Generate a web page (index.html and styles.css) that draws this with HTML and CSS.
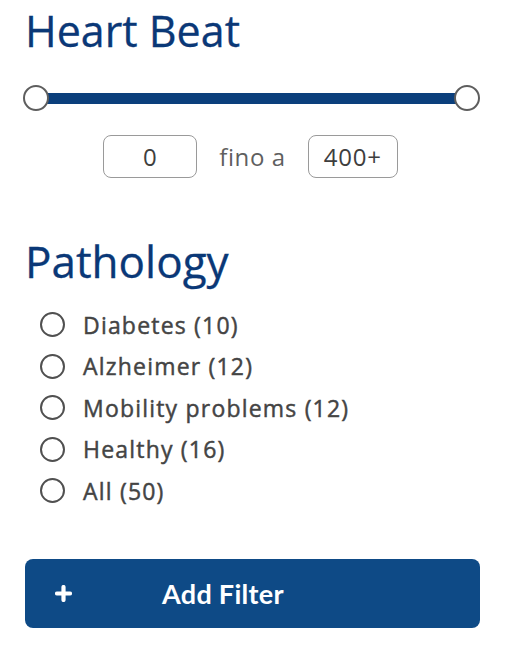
FILE: index.html
```html
<!DOCTYPE html>
<html lang="it">
<head>
<meta charset="utf-8">
<title>Filters</title>
<link rel="stylesheet" href="styles.css">
</head>
<body>
<div class="panel">
  <section class="group">
    <h2 class="title">Heart Beat</h2>
    <div class="slider">
      <div class="track"></div>
      <span class="knob knob-left"></span>
      <span class="knob knob-right"></span>
    </div>
    <div class="range">
      <div class="box box-min">0</div>
      <span class="range-sep">fino a</span>
      <div class="box box-max">400+</div>
    </div>
  </section>

  <section class="group">
    <h2 class="title title-path">Pathology</h2>
    <ul class="options">
      <li class="option"><span class="radio"></span><span class="label">Diabetes (10)</span></li>
      <li class="option"><span class="radio"></span><span class="label">Alzheimer (12)</span></li>
      <li class="option"><span class="radio"></span><span class="label">Mobility problems (12)</span></li>
      <li class="option"><span class="radio"></span><span class="label">Healthy (16)</span></li>
      <li class="option"><span class="radio"></span><span class="label">All (50)</span></li>
    </ul>
  </section>

  <button class="add-btn" type="button">
    <svg class="plus" width="17" height="17" viewBox="0 0 17 17" aria-hidden="true">
      <path d="M8.5 2v13M2 8.5h13" stroke="#fff" stroke-width="4.2" stroke-linecap="round"/>
    </svg>
    <span class="add-text">Add Filter</span>
  </button>
</div>
</body>
</html>
```

FILE: styles.css
```css
* { box-sizing: border-box; }

html, body {
  margin: 0;
  padding: 0;
  background: #ffffff;
}

body {
  font-family: "Open Sans", "Liberation Sans", sans-serif;
}

.panel {
  width: 512px;
  padding: 0 32px 0 25px;
  display: flex;
  flex-direction: column;
}

.title {
  margin: 6px 0 0 0;
  font-family: "Open Sans", sans-serif;
  font-weight: 400;
  font-size: 43px;
  line-height: 50px;
  color: #0a3877;
  -webkit-text-stroke: 0.3px #0a3877;
}

.slider {
  position: relative;
  margin: 29px 0 0 -2px;
  height: 26px;
  width: 457px;
  display: flex;
  align-items: center;
}

.track {
  flex: 1;
  height: 11px;
  margin: 0 12px;
  background: #0b3f7c;
}

.knob {
  position: absolute;
  top: 0;
  width: 26px;
  height: 26px;
  border-radius: 50%;
  background: #fff;
  border: 2px solid #5e5e5e;
}

.knob-left { left: 0; }
.knob-right { right: 0; }

.range {
  margin: 24px 0 0 -4px;
  display: flex;
  justify-content: center;
  align-items: center;
  gap: 22px;
}

.box {
  height: 43px;
  border: 1.5px solid #9a9a9a;
  border-radius: 8px;
  display: flex;
  align-items: center;
  justify-content: center;
  font-size: 24px;
  letter-spacing: 0.8px;
  color: #3e3e3e;
}

.box-min { width: 94px; }
.box-max { width: 90px; }

.range-sep {
  font-size: 24px;
  letter-spacing: 0.6px;
  color: #5f5f5f;
}

.title-path {
  margin-top: 58px;
  font-size: 44px;
}

.options {
  list-style: none;
  margin: 18px 0 0 0;
  padding: 0 0 0 15px;
}

.option {
  height: 41.5px;
  display: flex;
  align-items: center;
  gap: 18px;
}

.radio {
  width: 25px;
  height: 25px;
  border-radius: 50%;
  border: 2.2px solid #505050;
  flex: none;
}

.label {
  font-size: 23px;
  font-weight: 400;
  letter-spacing: 1.2px;
  color: #444444;
  -webkit-text-stroke: 0.45px #444444;
}

.add-btn {
  margin-top: 47px;
  height: 69px;
  width: 455px;
  border: none;
  border-radius: 8px;
  background: #0e4a86;
  display: flex;
  align-items: center;
  padding: 0 0 0 30px;
  cursor: pointer;
}

.plus {
  flex: none;
}

.add-text {
  margin-left: 90px;
  font-family: "Lato", sans-serif;
  font-weight: 700;
  font-size: 27px;
  letter-spacing: 0.3px;
  color: #ffffff;
}
```
